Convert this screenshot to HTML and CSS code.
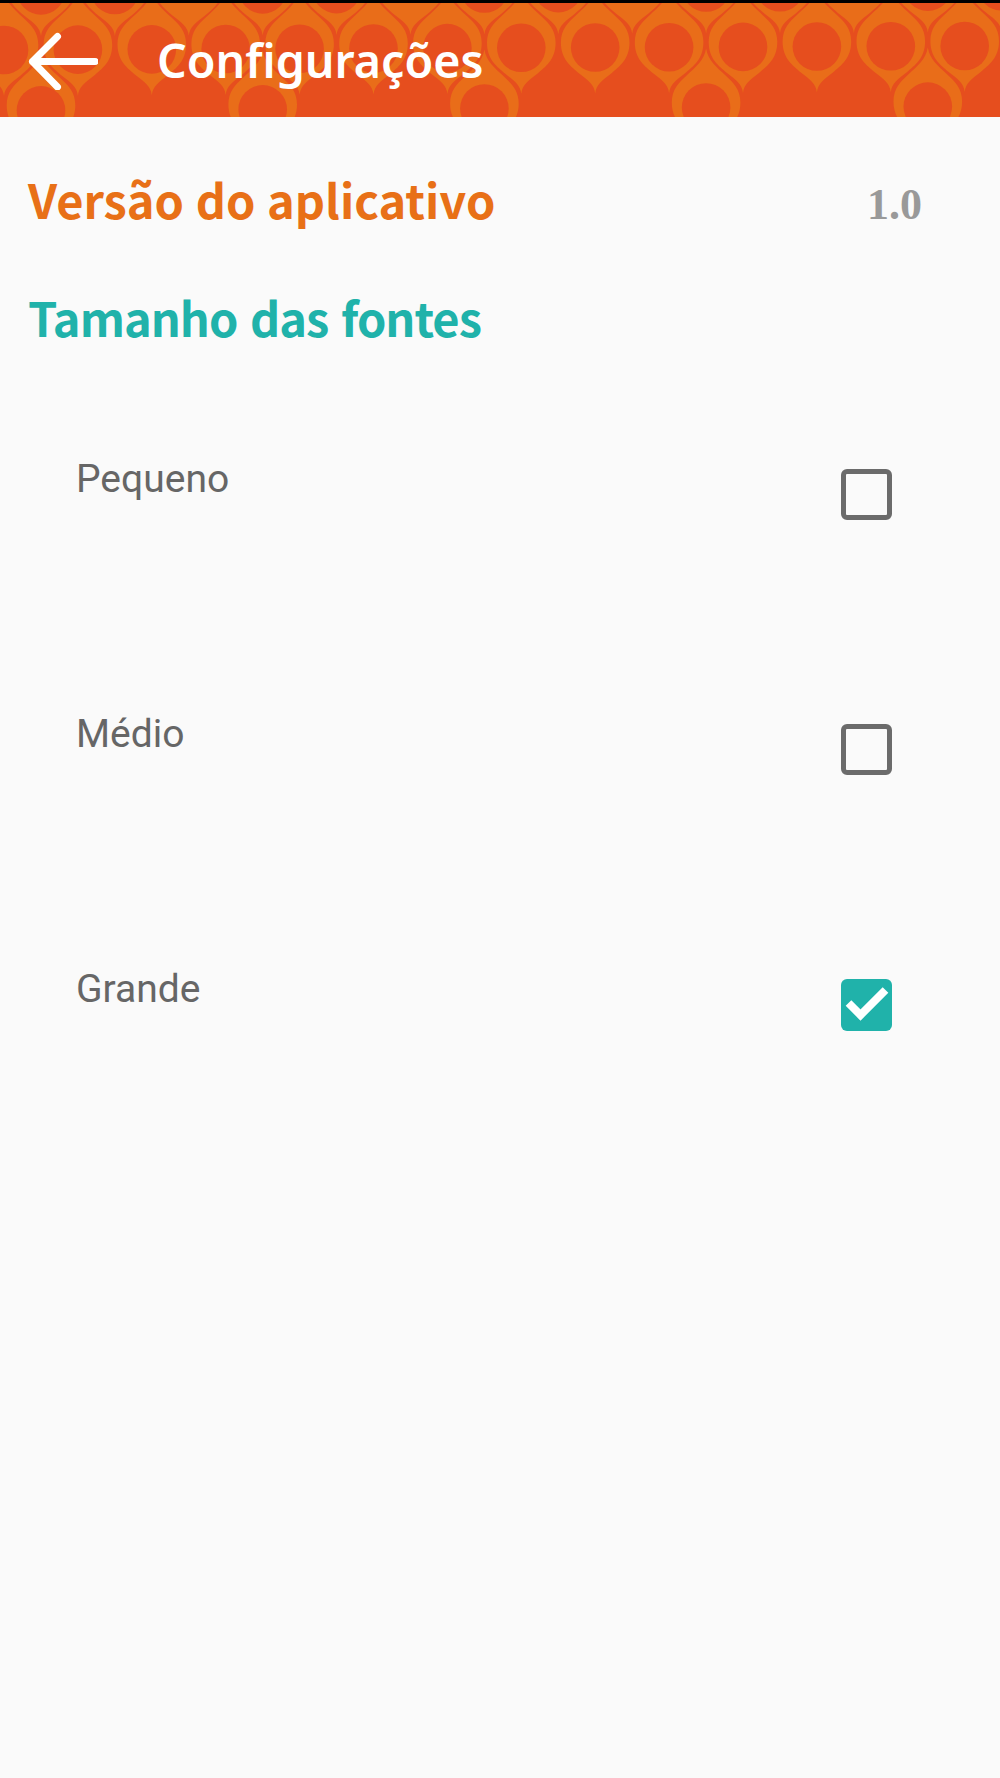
FILE: index.html
```html
<!DOCTYPE html>
<html lang="pt-BR">
  <head>
    <meta charset="UTF-8" />
    <meta name="viewport" content="width=device-width, initial-scale=1.0" />
    <title>Configurações</title>
    <link rel="stylesheet" href="styles.css">
  </head>
  <body>
    <header class="toolbar">
      <svg class="pattern" id="pattern" width="1000" height="114" viewBox="0 3 1000 114" aria-hidden="true">
        <defs>
          <path id="drop" d="M-34.3 -5C-34.3 -18 -27 -25 -20 -31.5C-10 -41 -2 -47 0 -59C2 -47 10 -41 20 -31.5C27 -25 34.3 -18 34.3 -5C34.3 12 24 19 16 26C7 33 1 37 0 46C-1 37 -7 33 -16 26C-24 19 -34.3 12 -34.3 -5Z" />
        </defs>
      </svg>
      <button class="back" aria-label="Voltar">
        <svg width="70" height="60" viewBox="0 0 70 60">
          <path d="M29.5 6.5L4.5 31.5L29.5 57M4.5 31.5H67" />
        </svg>
      </button>
      <h1 class="title">Configurações</h1>
    </header>

    <main class="settings">
      <div class="version">
        <h2 class="heading orange">Versão do aplicativo</h2>
        <span class="version-number">1.0</span>
      </div>
      <h2 class="heading teal">Tamanho das fontes</h2>

      <div class="options">
        <label class="option">
          <span>Pequeno</span>
          <input type="checkbox" />
        </label>
        <label class="option">
          <span>Médio</span>
          <input type="checkbox" />
        </label>
        <label class="option">
          <span>Grande</span>
          <span class="check">
            <input type="checkbox" checked />
            <svg class="tick" width="51" height="52" viewBox="0 0 51 52">
              <path d="M7.5 24L19.5 36L44.5 11" />
            </svg>
          </span>
        </label>
      </div>
    </main>

    <script>
      const SVG_NS = "http://www.w3.org/2000/svg";
      const STEP = 73.9;
      const pattern = document.getElementById("pattern");

      function addDrop(x, y, hasCircle) {
        // the rows climb slightly to the right
        const cy = y - x * 0.0042;

        const drop = document.createElementNS(SVG_NS, "use");
        drop.setAttribute("href", "#drop");
        drop.setAttribute("x", x);
        drop.setAttribute("y", cy);
        pattern.appendChild(drop);

        if (hasCircle) {
          const circle = document.createElementNS(SVG_NS, "circle");
          circle.setAttribute("cx", x);
          circle.setAttribute("cy", cy);
          circle.setAttribute("r", 24.3);
          pattern.appendChild(circle);
        }
      }

      for (let i = -1; i < 14; i++) {
        const middle = 41 + STEP * i;
        addDrop(middle, -9.5, (i + 1) % 3 !== 0);
        addDrop(4 + STEP * i, 50, true);
        if (i % 3 === 0) {
          addDrop(middle, 110.5, true);
        }
      }
    </script>
  </body>
</html>
```
FILE: styles.css
```css
* {
  margin: 0;
  padding: 0;
  box-sizing: border-box;
}

body {
  min-height: 100vh;
  background: #fafafa;
  font-family: Roboto, sans-serif;
}

.toolbar {
  position: relative;
  display: flex;
  align-items: flex-start;
  height: 117px;
  padding-left: 28px;
  background: #e64e1e;
  border-top: 3px solid #000;
  overflow: hidden;
}

.pattern {
  position: absolute;
  top: 0;
  left: 0;
  fill: #e96d19;
}

.pattern circle {
  fill: #e64e1e;
}

.back {
  position: relative;
  width: 70px;
  height: 60px;
  margin-top: 27px;
  border: none;
  background: none;
}

.back svg {
  display: block;
  fill: none;
  stroke: #fff;
  stroke-width: 7;
  stroke-linecap: round;
  stroke-linejoin: round;
}

.title {
  position: relative;
  margin: 27px 0 0 59px;
  color: #fff;
  font-family: "Noto Sans", sans-serif;
  font-size: 46.6px;
  font-weight: 600;
  line-height: 60px;
}

.settings {
  padding-left: 28px;
}

.version {
  display: flex;
  justify-content: space-between;
  align-items: baseline;
  padding: 52px 78px 0 0;
}

.heading {
  font-family: "Noto Sans CJK SC", sans-serif;
  font-size: 47px;
  font-weight: 700;
  line-height: 60px;
  white-space: nowrap;
}

.orange {
  color: #e87017;
  word-spacing: 1px;
}

.teal {
  margin-top: 52px;
  color: #20b2aa;
  letter-spacing: -1px;
  word-spacing: 3px;
}

.version-number {
  color: #999;
  font-family: "Liberation Serif", serif;
  font-size: 44px;
  font-weight: 700;
  line-height: 60px;
}

.options {
  padding: 109px 108px 0 48px;
}

.option {
  display: flex;
  justify-content: space-between;
  align-items: flex-start;
  height: 255px;
  color: #666;
  font-size: 39px;
  line-height: 46px;
}

.option input {
  display: block;
  width: 51px;
  height: 51px;
  margin-top: 13px;
  appearance: none;
  border: 5px solid #6b6b6b;
  border-radius: 6px;
}

.option input:checked {
  height: 52px;
  border: none;
  background: #20b2aa;
}

.check {
  position: relative;
}

.tick {
  position: absolute;
  top: 13px;
  left: 0;
  fill: none;
  stroke: #fff;
  stroke-width: 8;
}
```
